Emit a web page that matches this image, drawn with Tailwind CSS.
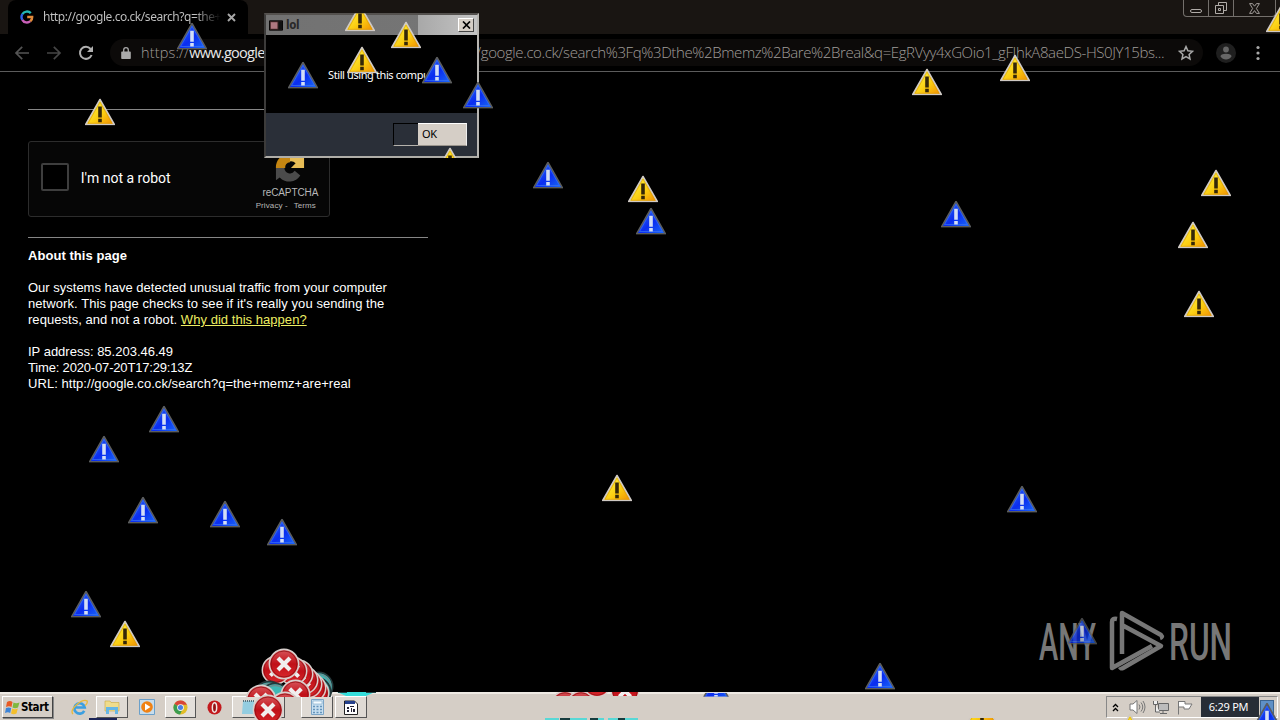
<!DOCTYPE html>
<html lang="en">
<head>
<meta charset="utf-8">
<title>http://google.co.ck/search?q=the+memz+are+real</title>
<script src="https://cdn.jsdelivr.net/npm/@tailwindcss/browser@4"></script>
</head>
<body class="bg-black">
<svg class="absolute w-0 h-0">
  <defs>
    <linearGradient id="gy" x1="0" y1="0" x2="1" y2="1"><stop offset="0.2" stop-color="#fff23a"/><stop offset="0.6" stop-color="#fbcb10"/><stop offset="1" stop-color="#f08a00"/></linearGradient>
    <linearGradient id="gb" x1="0" y1="0" x2="1" y2="1"><stop offset="0.2" stop-color="#2458f0"/><stop offset="0.55" stop-color="#0a2cf0"/><stop offset="1" stop-color="#1a6cf8"/></linearGradient>
    <linearGradient id="gr" x1="0" y1="0" x2="0" y2="1"><stop offset="0" stop-color="#d8575c"/><stop offset="0.5" stop-color="#c01018"/><stop offset="1" stop-color="#d8282c"/></linearGradient>
    <symbol id="warn" viewBox="0 0 30 27">
      <path d="M15 .8 29.3 26H.7Z" fill="url(#gy)" stroke="#cfc9c4" stroke-width="1.6" stroke-linejoin="round"/>
      <path d="M15 3.6 27 24.8H3Z" fill="none" stroke="#d99a08" stroke-width=".6"/>
      <path d="M13.2 8h3.6v11h-3.6zM13.2 20.3h3.6v3.4h-3.6z" fill="#352708"/>
    </symbol>
    <symbol id="info" viewBox="0 0 30 27">
      <path d="M15 .8 29.3 26H.7Z" fill="url(#gb)" stroke="#5b5d5e" stroke-width="1.6" stroke-linejoin="round"/>
      <path d="M15 3.600 26.500 23.800H3.500Z" fill="none" stroke="#3b72f0" stroke-width=".7"/>
      <path d="M13.200 8h3.600v11h-3.600zM13.200 20.300h3.600v3.400h-3.600z" fill="#d3def6"/>
    </symbol>
    <symbol id="err" viewBox="0 0 32 32">
      <circle cx="16" cy="16" r="14.6" fill="url(#gr)" stroke="#d8cfcc" stroke-width="1.6"/>
      <circle cx="16" cy="16" r="13" fill="none" stroke="#8e1014" stroke-width=".8"/>
      <path d="M10 10 22 22M22 10 10 22" stroke="#f1eeee" stroke-width="4.2"/>
    </symbol>
    <symbol id="cyan" viewBox="0 0 32 32">
      <circle cx="16" cy="16" r="14.6" fill="#3fb8b6" stroke="#25383a" stroke-width="1.8"/>
      <circle cx="16" cy="16" r="12.5" fill="none" stroke="#6b8f90" stroke-width="1.4"/>
    </symbol>
  </defs>
</svg>

<div class="relative flex h-[720px] w-[1280px] flex-col overflow-hidden bg-black font-['Liberation_Sans',sans-serif] text-white">

  <!-- tab strip -->
  <header class="flex h-[34px] shrink-0 items-start justify-between bg-[#191512]">
    <div class="ml-2 flex h-[34px] w-[240px] items-center rounded-t-lg bg-black pl-3">
      <svg class="h-[14px] w-[14px] shrink-0" viewBox="0 0 14 14" fill="none" stroke-width="2.4">
        <path d="M2.4 4.2A5.3 5.3 0 0 1 10.8 3.2" stroke="#22b8b4"/>
        <path d="M2.4 4.2A5.3 5.3 0 0 0 2.3 9.8" stroke="#2e62e8"/>
        <path d="M2.3 9.8A5.3 5.3 0 0 0 10.3 11.2" stroke="#c95fb8"/>
        <path d="M10.3 11.2A5 5 0 0 0 12.2 7H7.2" stroke="#e08a3a"/>
      </svg>
      <span class="ml-[9px] w-[178px] bg-gradient-to-r from-[#c4c4c4] from-85% to-transparent bg-clip-text text-[12px] tracking-[-0.45px] whitespace-nowrap text-transparent font-['Noto_Sans',sans-serif]">http://google.co.ck/search?q=the+</span>
      <svg class="ml-[6px] h-[9px] w-[9px] shrink-0" viewBox="0 0 9 9" stroke="#a8a8a8" stroke-width="1.9"><path d="M1 1 8 8M8 1 1 8"/></svg>
    </div>
    <div class="mr-[4px] flex h-[17px] w-[93px] rounded-b border border-t-0 border-[#74706c]">
      <div class="flex w-[25px] items-end justify-center border-r border-[#74706c] pb-[3px]"><span class="h-[4px] w-[12px] rounded-sm border border-[#b0aca8]"></span></div>
      <div class="flex w-[25px] items-center justify-center border-r border-[#74706c]">
        <svg class="h-[14px] w-[14px]" viewBox="0 0 14 14" fill="#191512" stroke="#b0aca8"><path d="M4.5 1.5h8v8h-8z"/><path d="M1.5 4.5h8v8h-8z"/><path d="M4.5 7.5h2v2h-2z"/></svg>
      </div>
      <div class="flex flex-1 items-center justify-center"><svg class="h-[11px] w-[11px]" viewBox="0 0 11 11" fill="none" stroke="#b0aca8" stroke-width=".9"><path d="M.6.6H3.5L5.5 3.2 7.5.6H10.4L7.4 5.5 10.4 10.4H7.5L5.5 7.6 3.5 10.4H.6L3.600 5.500Z"/></svg></div>
    </div>
  </header>

  <!-- toolbar -->
  <nav class="flex h-[38px] shrink-0 items-center border-b border-[#5c5c5c] pl-[14px]">
    <svg class="h-4 w-4" viewBox="0 0 16 16" fill="none" stroke="#545454" stroke-width="1.7"><path d="M15 8H2M8.2 1.8 2 8l6.2 6.2"/></svg>
    <svg class="ml-4 h-4 w-4" viewBox="0 0 16 16" fill="none" stroke="#464646" stroke-width="1.7"><path d="M1 8h13M7.8 1.8 14 8l-6.2 6.2"/></svg>
    <svg class="ml-4 h-4 w-4" viewBox="0 0 16 16" fill="none" stroke="#b0b0b0" stroke-width="2"><path d="M13.6 10A6 6 0 1 1 12.6 4"/><path d="M15 1v6H9z" fill="#b0b0b0" stroke="none"/></svg>
    <div class="ml-[16px] flex h-[27px] w-[1093px] items-center rounded-full bg-[#0c0a09] pl-[11px] font-['Open_Sans',sans-serif] text-[15px] font-light whitespace-nowrap text-[#a09d9a]">
      <svg class="h-3 w-[10px] shrink-0" viewBox="0 0 10 12"><path d="M1 4.5h8a.8.8 0 0 1 .8.8v5.9a.8.8 0 0 1-.8.8H1a.8.8 0 0 1-.8-.8V5.3A.8.8 0 0 1 1 4.5Z" fill="#aaa"/><path d="M2.7 5V3a2.3 2.3 0 0 1 4.6 0v2" fill="none" stroke="#aaa" stroke-width="1.3"/></svg>
      <span class="ml-[10px] w-[335px] shrink-0 text-[14.5px] tracking-[-0.35px]"><span class="tracking-[0.15px]">https://</span><span class="font-normal tracking-[-0.7px] text-[#e8e8e8]">www.google</span></span>
      <span class="w-[690px] shrink-0 tracking-[-0.39px]">/google.co.ck/search%3Fq%3Dthe%2Bmemz%2Bare%2Breal&amp;q=EgRVyy4xGOio1_gFIhkA8aeDS-HS0JY15bs...</span>
      <svg class="ml-[12px] h-4 w-4 shrink-0" viewBox="0 0 16 16" fill="none" stroke="#a8a8a8" stroke-width="1.5"><path d="m8 1.6 1.9 4.2 4.6.5-3.4 3.1.9 4.6-4-2.3-4 2.3.9-4.6L1.500 6.300l4.600-.5Z"/></svg>
    </div>
    <svg class="ml-[13px] h-5 w-5" viewBox="0 0 20 20"><circle cx="10" cy="10" r="10" fill="#1f1f1f"/><circle cx="10" cy="6.500" r="2.900" fill="#666"/><path d="M4.500 13.500Q4.500 10.800 10 10.800t5.500 2.700Q13.500 16.500 10 16.500t-5.500-3Z" fill="#666"/></svg>
    <svg class="ml-[19px] h-4 w-[6px]" viewBox="0 0 6 16" fill="#a8a8a8"><circle cx="3" cy="2.500" r="1.600"/><circle cx="3" cy="8" r="1.600"/><circle cx="3" cy="13.500" r="1.600"/></svg>
  </nav>

  <!-- page -->
  <main class="flex h-[620px] shrink-0 flex-col items-start pl-[28px] text-[13px] leading-4">
    <div class="mt-[37px] h-px w-[400px] bg-[#868686]"></div>
    <div class="mt-[31px] flex h-[76px] w-[302px] items-center rounded-[3px] border border-[#2c2c2c] bg-[#060606] pl-[12px]">
      <span class="mb-[4px] h-7 w-7 rounded-[2px] border-2 border-[#3e3e3e] bg-black"></span>
      <span class="mb-[3px] ml-3 w-[150px] font-['Roboto',sans-serif] text-[14px]">I'm not a robot</span>
      <div class="mt-[7px] ml-[10px] flex w-[90px] flex-col items-center text-[#b8b8b8]">
        <svg class="ml-[11px] h-[30px] w-[30px]" viewBox="0 0 32 32"><path d="M1 16A14 14 0 0 1 16 1v9a5 5 0 0 0-5 6Z" fill="#c58612"/><path d="M16 1h15v15H17l5-5a7 7 0 0 0-6-2Z" fill="#e7bd56"/><path d="M1 16h9a6 6 0 0 0 11 3l6 5A14 14 0 0 1 5 26l-4 3Z" fill="#4b4b4b"/></svg>
        <span class="mt-[4px] pl-[12px] text-[10px] leading-[12px] tracking-[-0.1px]">reCAPTCHA</span>
        <span class="flex gap-[6px] pl-[3px] text-[8px] leading-[13px] tracking-[0.1px]"><span>Privacy -</span><span>Terms</span></span>
      </div>
    </div>
    <div class="mt-[20px] h-px w-[400px] bg-[#868686]"></div>
    <h1 class="mt-[10px] font-bold tracking-[0.05px]">About this page</h1>
    <p class="mt-4 whitespace-nowrap">Our systems have detected unusual traffic from your computer<br><span class="tracking-[0.07px]">network. This page checks to see if it's really you sending the</span><br><span class="tracking-[0.04px]">requests, and not a robot. <a class="text-[#eded62] underline">Why did this happen?</a></span></p>
    <p class="mt-4">IP address: 85.203.46.49<br><span class="tracking-[-0.17px]">Time: 2020-07-20T17:29:13Z</span><br><span class="tracking-[0.05px]">URL: http://google.co.ck/search?q=the+memz+are+real</span></p>
  </main>

  <!-- piled-up error icons behind the taskbar -->
  <div class="absolute top-0 left-0 h-[697px] w-[1280px] overflow-hidden">
    <svg class="absolute top-0 left-0 h-[697px] w-[1280px]" viewBox="0 0 1280 697">
      <use href="#cyan" x="303" y="671" width="31" height="31"/>
      <use href="#cyan" x="300" y="676" width="32" height="32"/>
      <use href="#err" x="300" y="678" width="30" height="30"/><use href="#err" x="297" y="673" width="30" height="30"/><use href="#err" x="293" y="669" width="30" height="30"/><use href="#err" x="289" y="665" width="30" height="30"/><use href="#err" x="284" y="659" width="30" height="30"/><use href="#err" x="278" y="656" width="30" height="30"/>
      <use href="#err" x="261" y="655" width="30" height="30"/>
      <use href="#cyan" x="252" y="680" width="34" height="34"/><use href="#cyan" x="259" y="682" width="32" height="32"/>
      <use href="#err" x="245" y="684" width="32" height="32"/><use href="#err" x="280" y="679" width="31" height="31"/><use href="#err" x="269" y="691" width="32" height="32"/>
      <use href="#err" x="268" y="648" width="32" height="32"/>
    </svg>
  </div>

  <!-- taskbar -->
  <footer class="flex h-[28px] shrink-0 items-center border-t-2 border-[#eeeae4] bg-[#d5cec6] pl-[2px] text-black">
    <div class="flex h-[22px] w-[51px] items-center border border-t-[#fff] border-r-[#444] border-b-[#444] border-l-[#fff] pl-[2px] shadow-[1px_1px_0_#888]">
      <svg class="h-[15px] w-[15px]" viewBox="0 0 15 15"><path d="M2 2Q5 0 7.500 2L6.500 7Q4 5.500 1 7Z" fill="#e85a24"/><path d="M8.500 2.500Q11 4 14.500 2.500L13 7.500Q10 9 7.500 7.500Z" fill="#7fb83e"/><path d="M1 8Q3.500 6.800 6.200 8L5.200 13Q3 11.500 0 13Z" fill="#3c84d8"/><path d="M7.200 8.500Q10 10 12.800 8.500L11.500 13.500Q8.500 15 6 13.500Z" fill="#f4bf2c"/></svg>
      <span class="mt-px ml-[1px] font-['DejaVu_Sans_Condensed','DejaVu_Sans',sans-serif] text-[11.5px] font-bold tracking-[-0.4px]">Start</span>
    </div>
    <div class="ml-[13px] flex h-[22px] items-center">
      <div class="flex w-[30px] justify-center pr-[3px]"><svg class="h-[17px] w-[17px]" viewBox="0 0 18 18" fill="none"><path d="M14 12.500A5.500 5.500 0 1 1 14.500 9H4" stroke="#3c9fe0" stroke-width="2.800"/><path d="M2 16Q-1 12 6 6T17 2Q18 4 15 7" stroke="#e9b93a" stroke-width="1.400"/></svg></div>
      <div class="flex h-[22px] w-[32px] items-center justify-center border border-t-white border-r-[#555] border-b-[#555] border-l-white bg-[#dfdad4]"><svg class="h-4 w-4" viewBox="0 0 16 16"><path d="M1 2h5l1 1.500h8V12H1Z" fill="#efdc8c" stroke="#c9a940" stroke-width=".6"/><path d="M2 8h12v7h-3v-4H5v4H2Z" fill="#66b7e6"/></svg></div>
      <div class="flex w-[37px] justify-center"><svg class="h-4 w-4" viewBox="0 0 16 16"><path d="M.5.5h15v15H.5z" fill="#c8ddec" stroke="#6ba0ca"/><circle cx="8" cy="8" r="5.800" fill="#f08214"/><path d="M6 4.500 11.500 8 6 11.500Z" fill="#fff"/></svg></div>
      <div class="flex h-[22px] w-[31px] items-center justify-center border border-t-white border-r-[#555] border-b-[#555] border-l-white bg-[#e3dfda]"><svg class="h-[15px] w-[15px]" viewBox="0 0 16 16"><circle cx="8" cy="8" r="7.500" fill="#e2bd28"/><path d="M8 8 1.500 4.200A7.500 7.500 0 0 1 14.800 5H8Z" fill="#d84538"/><path d="M8 8 1.500 4.200A7.500 7.500 0 0 0 7.500 15.500L10 10Z" fill="#3c9d50"/><circle cx="8" cy="8" r="3.600" fill="#f4f4f4"/><circle cx="8" cy="8" r="2.700" fill="#4b7fe0"/></svg></div>
      <div class="flex w-[36px] justify-center"><svg class="h-[15px] w-[15px]" viewBox="0 0 16 16"><circle cx="8" cy="8" r="7.500" fill="#c3191c"/><ellipse cx="8" cy="8" rx="2.300" ry="5" fill="#941012" stroke="#f1e8e6" stroke-width="1.600"/></svg></div>
      <div class="flex h-[22px] w-[53px] items-center border border-t-white border-r-[#555] border-b-[#555] border-l-white bg-[#dfdad4] pl-[9px]"><svg class="h-4 w-[13px]" viewBox="0 0 13 16"><path d="M1 2h11l-1 13H0Z" fill="#94cde0"/><path d="M1 2h11" stroke="#58727c" stroke-width="2" stroke-dasharray="1 1"/></svg></div>
      <div class="ml-[16px] flex h-[22px] w-[32px] items-center justify-center border border-t-white border-r-[#555] border-b-[#555] border-l-white bg-[#dfdad4]"><svg class="h-4 w-[13px]" viewBox="0 0 13 16"><path d="M.5.500h12v15H.5z" fill="#c7dff0" stroke="#7ba4c6"/><path d="M2 2h9v3H2z" fill="#f4fbff" stroke="#7ba4c6" stroke-width=".6"/><path d="M2 7.500h9M2 10.500h9M2 13.500h9" stroke="#6593ba" stroke-width="1.700" stroke-dasharray="2 1.500"/></svg></div>
      <div class="ml-[2px] flex h-[22px] w-[32px] items-center justify-center border border-t-white border-r-[#555] border-b-[#555] border-l-white bg-[#dfdad4]"><svg class="h-[15px] w-[14px]" viewBox="0 0 14 15"><path d="M.5 1h10L13.500 4v10.500H.5Z" fill="#fff" stroke="#222"/><path d="M1 1h10v3H1z" fill="#24408c"/><path d="M3 7h2v2H3zM6 6h4v1H6zM3 10h2v2H3zM7 8h1v4H7zM9 9h2v3H9z" fill="#223"/></svg></div>
    </div>
    <div class="ml-auto flex h-[22px] w-[172px] items-center border border-t-[#888] border-r-white border-b-white border-l-[#888]">
      <svg class="ml-[5px] h-[9px] w-[7px]" viewBox="0 0 7 9" fill="none" stroke="#000" stroke-width="1.300"><path d="M1 4 3.500 1.500 6 4M1 8 3.500 5.500 6 8"/></svg>
      <svg class="ml-[10px] h-4 w-[17px]" viewBox="0 0 17 16" fill="#fff" stroke="#777"><path d="M1 5h3l4-3.500v13L4 11H1Z"/><path d="M10 5.500Q12 8 10 10.500M12 3.500Q15.500 8 12 12.500M14 2Q18 8 14 14" fill="none"/></svg>
      <svg class="ml-[7px] h-[15px] w-4" viewBox="0 0 16 15" fill="#eee" stroke="#666"><path d="M5.500 3.500h10v7h-10z" fill="#bcbcbc"/><path d="M.5 1v3.500h4V1M2.500 4.500V12H7M7 13.500h7M10 10.500v3"/></svg>
      <svg class="ml-[8px] h-[15px] w-4" viewBox="0 0 16 15" fill="#fff" stroke="#777"><path d="M1.500 1v13.500M1.500 1.500H8V4h7l-3 5H7V7H1.500"/></svg>
      <div class="ml-[8px] flex h-[20px] w-[58px] items-center justify-center bg-[#272d36] pr-[3px] font-['Noto_Sans',sans-serif] text-[11px] tracking-[-0.25px] text-white">6:29 PM</div>
      <div class="ml-[1px] h-[14px] w-[14px] border border-[#3b6490] bg-[#5f90c6]"></div>
    </div>
    <div class="w-[2px]"></div>
  </footer>

  <!-- dialog -->
  <section class="absolute top-[13px] left-[264px] flex h-[145px] w-[215px] flex-col border-2 border-t-[#54514e] border-r-[#b8b6b2] border-b-[#b0aea8] border-l-[#3c3b3a] bg-[#2a2f38] font-['Noto_Sans',sans-serif] text-[11px]">
    <div class="flex h-[20px] shrink-0 items-center bg-linear-to-r from-[#727272] to-[#767676]">
      <svg class="ml-[3px] h-[11px] w-[14px] shrink-0" viewBox="0 0 15 11"><path d="M.5.500h14v10H.5z" fill="#4c2c2c" stroke="#000"/><path d="M2 2h7v7H2z" fill="#b07880"/><path d="M10 1h4v9h-4z" fill="#111"/></svg>
      <span class="mt-px ml-[3px] font-['DejaVu_Sans_Condensed','DejaVu_Sans',sans-serif] text-[11.5px] font-bold tracking-[-0.3px] text-[#292929]">lol</span>
      <div class="ml-auto flex h-full w-[59px] items-center justify-end bg-linear-to-r from-[#a8a8a8] to-[#c4c4c4] pr-[3px]">
        <div class="flex h-[14px] w-4 items-center justify-center border border-t-white border-r-[#444] border-b-[#444] border-l-white bg-[#d5cec6]"><svg class="h-2 w-[9px]" viewBox="0 0 9 8" stroke="#000" stroke-width="1.700"><path d="M1 .5 8 7.500M8 .5 1 7.500"/></svg></div>
      </div>
    </div>
    <div class="flex h-[78px] shrink-0 items-center bg-black pt-[2px] pl-[62px] tracking-[-0.4px] whitespace-nowrap">Still using this compu</div>
    <div class="ml-[127px] mt-[10px] flex h-[23px] w-[74px]">
      <div class="w-[25px] border border-t-black border-r-0 border-b-[#b5b2ac] border-l-black"></div>
      <div class="flex-1 border border-t-white border-r-[#eee] border-b-[#9a948c] border-l-0 bg-[#d5cec6] pl-1 leading-[20px] tracking-[-0.3px] text-black">OK</div>
    </div>
  </section>

  <!-- watermark -->
  <svg class="absolute top-[606px] left-[1034px] h-[80px] w-[220px]" viewBox="0 0 220 80" fill="#777">
    <text x="5" y="53.500" textLength="57" lengthAdjust="spacingAndGlyphs" font-family="Roboto" font-weight="500" font-size="51">ANY</text>
    <text x="135" y="53.500" textLength="63" lengthAdjust="spacingAndGlyphs" font-family="Roboto" font-weight="500" font-size="51">RUN</text>
    <g fill="none" stroke="#777" stroke-width="4.500" stroke-linejoin="round"><path d="M88 48V7L127 29Q129 31 126 32M88 19l39 21-38 22q-2 1-3-1"/><path d="M83 13q-5-1-5 3v46l40-22"/></g>
  </svg>

  <!-- scattered cursor icons -->
  <svg class="pointer-events-none absolute top-0 left-0 h-[720px] w-[1280px]" viewBox="0 0 1280 720">
    <defs>
      <clipPath id="c1"><path d="M340 13h40v20h-40z"/></clipPath>
      <clipPath id="c2"><path d="M430 140h40v17.500h-40z"/></clipPath>
      <clipPath id="c3"><path d="M690 692h50v4h-50zM550 692h90v4h-90z"/></clipPath>
      <clipPath id="c4"><path d="M540 717.500h460v3h-460z"/></clipPath>
    </defs>
    <path d="M337 692h38l-9 4h-20Z" fill="#35dedb"/><path d="M338 692.500h9M366 692.500h10" stroke="#1d4648"/>
    <g transform="translate(0 .5)">
      <use href="#warn" x="85" y="98" width="30" height="27"/>
      <g clip-path="url(#c1)"><use href="#warn" x="345" y="4" width="30" height="27"/></g>
      <use href="#warn" x="391" y="21" width="30" height="27"/>
      <use href="#warn" x="347" y="46" width="30" height="27"/>
      <g clip-path="url(#c2)"><use href="#warn" x="435" y="147" width="30" height="27"/></g>
      <use href="#warn" x="912" y="68" width="30" height="27"/>
      <use href="#warn" x="1000" y="54" width="30" height="27"/>
      <use href="#warn" x="628" y="175" width="30" height="27"/>
      <use href="#warn" x="1201" y="169" width="30" height="27"/>
      <use href="#warn" x="1178" y="221" width="30" height="27"/>
      <use href="#warn" x="1184" y="290" width="30" height="27"/>
      <use href="#warn" x="602" y="474" width="30" height="27"/>
      <use href="#warn" x="110" y="620" width="30" height="27"/>
      <use href="#warn" x="1266" y="5" width="30" height="27"/>
      <use href="#warn" x="1115" y="713" width="30" height="27"/>
      <g clip-path="url(#c4)"><use href="#warn" x="967" y="696" width="30" height="27"/></g>
    </g>
    <g transform="translate(0 .7)">
      <use href="#info" x="177" y="22" width="30" height="27"/>
      <use href="#info" x="288" y="61" width="30" height="27"/>
      <use href="#info" x="422" y="56" width="30" height="27"/>
      <use href="#info" x="463" y="81" width="30" height="27"/>
      <use href="#info" x="533" y="161" width="30" height="27"/>
      <use href="#info" x="636" y="207" width="30" height="27"/>
      <use href="#info" x="941" y="200" width="30" height="27"/>
      <use href="#info" x="149" y="405" width="30" height="27"/>
      <use href="#info" x="89" y="435" width="30" height="27"/>
      <use href="#info" x="128" y="496" width="30" height="27"/>
      <use href="#info" x="210" y="500" width="30" height="27"/>
      <use href="#info" x="267" y="518" width="30" height="27"/>
      <use href="#info" x="71" y="590" width="30" height="27"/>
      <use href="#info" x="1007" y="485" width="30" height="27"/>
      <use href="#info" x="1067" y="617" width="30" height="27" opacity=".75"/>
      <use href="#info" x="865" y="662" width="30" height="27"/>
      <g clip-path="url(#c3)"><use href="#info" x="701" y="674" width="30" height="27"/></g>
      <use href="#info" x="1252" y="702" width="30" height="27"/>
    </g>
    <g clip-path="url(#c3)"><use href="#err" x="550" y="690" width="30" height="30"/><use href="#err" x="566" y="690" width="30" height="30"/><use href="#err" x="582" y="668" width="30" height="30"/><use href="#err" x="610" y="676" width="30" height="30"/></g>
    <path d="M545 719.500h14m4 0h24m3 0h14m4 0h30" stroke="#58d8d6" stroke-width="3"/><path d="M560 719h10m20 0h8m20 0h7" stroke="#173c3e" stroke-width="2"/>
    <path d="M89 719h28" stroke="#1c2558" stroke-width="2"/>
    <use href="#err" x="252" y="694" width="32" height="32"/>
  </svg>
</div>
</body>
</html>
